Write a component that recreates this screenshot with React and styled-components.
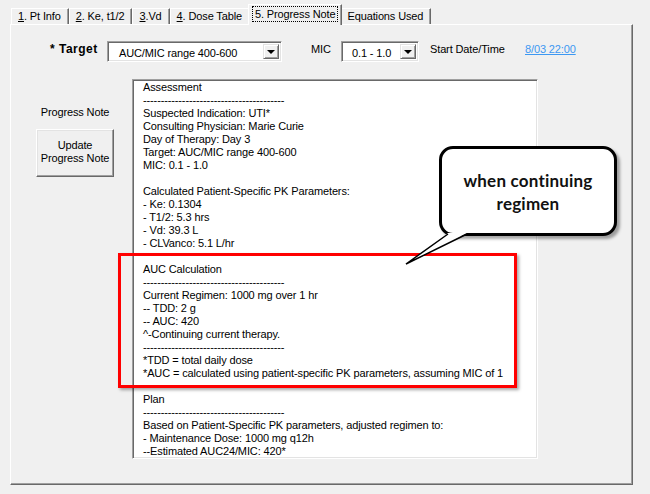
import React from "react";
import styled, { createGlobalStyle } from "styled-components";

const GlobalStyle = createGlobalStyle`
  html, body { margin: 0; padding: 0; background: #f0f0f0; }
  body { font-family: "Liberation Sans", Arial, sans-serif; font-size: 11px; color: #000; letter-spacing: -0.13px; }
`;

const Screen = styled.div`
  position: relative;
  width: 650px;
  height: 494px;
  overflow: hidden;
  background: #f0f0f0;
`;

const TabStrip = styled.div`
  display: flex;
  align-items: flex-end;
  height: 24px;
  padding-left: 11px;
  position: relative;
  z-index: 2;
`;

const Tab = styled.div`
  box-sizing: border-box;
  height: ${(p) => (p.$active ? "21px" : "16px")};
  margin: ${(p) => (p.$active ? "0 -2px -1px -2px" : "0")};
  padding: ${(p) => (p.$active ? "2px 4px 0 4px" : "0 5px 0 4px")};
  line-height: 15px;
  background: #f0f0f0;
  border-top: 1px solid #ffffff;
  border-left: 1px solid #ffffff;
  border-right: 1px solid #696969;
  box-shadow: inset -1px 0 0 #a0a0a0;
  white-space: nowrap;
  position: relative;
  z-index: ${(p) => (p.$active ? 3 : 1)};
`;

const TabText = styled.span`
  display: inline-block;
  padding: 0 2px;
  line-height: 14px;
  outline: ${(p) => (p.$focus ? "1px dotted #000" : "none")};
  outline-offset: 0;
`;

const Key = styled.span`
  text-decoration: underline;
`;

const Panel = styled.div`
  box-sizing: border-box;
  margin-left: 10px;
  width: 623px;
  height: 461px;
  border-top: 1px solid #ffffff;
  border-left: 1px solid #ffffff;
  border-right: 1px solid #696969;
  border-bottom: 1px solid #696969;
  box-shadow: inset -1px -1px 0 #a0a0a0;
  position: relative;
  z-index: 1;
`;

const TopRow = styled.div`
  display: flex;
  align-items: flex-start;
  margin-top: 16px;
  padding-left: 39px;
  height: 21px;
`;

const FieldLabel = styled.div`
  width: ${(p) => p.$w}px;
  margin-left: ${(p) => p.$ml || 0}px;
  padding-top: ${(p) => p.$pt || 2}px;
  font-weight: ${(p) => (p.$bold ? 700 : 400)};
  font-size: ${(p) => (p.$bold ? "12px" : "11px")};
  letter-spacing: ${(p) => (p.$bold ? "0.5px" : "-0.13px")};
  white-space: nowrap;
`;

const Select = styled.div`
  box-sizing: border-box;
  display: flex;
  width: ${(p) => p.$w}px;
  height: 21px;
  background: #fff;
  border-top: 1px solid #a0a0a0;
  border-left: 1px solid #a0a0a0;
  border-right: 1px solid #ffffff;
  border-bottom: 1px solid #ffffff;
  box-shadow: inset 1px 1px 0 #696969, inset -1px -1px 0 #e3e3e3;
  padding: 2px;
`;

const SelectValue = styled.div`
  flex: 1;
  padding-left: ${(p) => p.$pl}px;
  line-height: 16px;
  padding-top: 1px;
  white-space: nowrap;
`;

const DropButton = styled.div`
  box-sizing: border-box;
  width: 16px;
  height: 15px;
  background: #f0f0f0;
  border-top: 1px solid #e3e3e3;
  border-left: 1px solid #e3e3e3;
  border-right: 1px solid #696969;
  border-bottom: 1px solid #696969;
  box-shadow: inset 1px 1px 0 #ffffff, inset -1px -1px 0 #a0a0a0;
  display: flex;
  align-items: center;
  justify-content: center;
`;

const Arrow = styled.div`
  width: 0;
  height: 0;
  border-left: 4px solid transparent;
  border-right: 4px solid transparent;
  border-top: 4px solid #000;
  margin-top: 1px;
`;

const DateLink = styled.a`
  padding-top: 2px;
  color: #3d98f2;
  text-decoration: underline;
  white-space: nowrap;
  cursor: pointer;
`;

const ContentRow = styled.div`
  display: flex;
  align-items: flex-start;
  margin-top: 17px;
  padding-left: 25px;
`;

const SideColumn = styled.div`
  width: 78px;
  display: flex;
  flex-direction: column;
  align-items: center;
  padding-top: 27px;
`;

const SideLabel = styled.div`
  line-height: 13px;
  white-space: nowrap;
`;

const PushButton = styled.div`
  box-sizing: border-box;
  margin-top: 10px;
  width: 78px;
  height: 48px;
  background: #f0f0f0;
  border-top: 1px solid #ffffff;
  border-left: 1px solid #ffffff;
  border-right: 1px solid #696969;
  border-bottom: 1px solid #696969;
  box-shadow: inset -1px -1px 0 #a0a0a0, inset 1px 1px 0 #e3e3e3;
  display: flex;
  flex-direction: column;
  align-items: center;
  justify-content: center;
  line-height: 13px;
  text-align: center;
  padding-bottom: 3px;
`;

const NoteBox = styled.div`
  box-sizing: border-box;
  margin-left: 18px;
  width: 406px;
  height: 380px;
  background: #fff;
  border-top: 1px solid #a0a0a0;
  border-left: 1px solid #a0a0a0;
  border-right: 1px solid #ffffff;
  border-bottom: 1px solid #ffffff;
  box-shadow: inset 1px 1px 0 #696969, inset -1px -1px 0 #e3e3e3;
  padding: 1px 4px 0 10px;
  overflow: hidden;
`;

const NoteLine = styled.div`
  height: 13px;
  line-height: 13px;
  white-space: pre;
`;

const Highlight = styled.div`
  position: absolute;
  left: 118px;
  top: 253px;
  width: 399px;
  height: 135px;
  box-sizing: border-box;
  border: 3px solid #ff0000;
  box-shadow: 2px 2px 3px rgba(0, 0, 0, 0.35);
  z-index: 5;
`;

const Callout = styled.div`
  position: absolute;
  left: 439px;
  top: 146px;
  width: 178px;
  height: 90px;
  box-sizing: border-box;
  background: #fff;
  border: 3px solid #000;
  border-radius: 14px;
  box-shadow: 3px 3px 3px rgba(0, 0, 0, 0.35);
  display: flex;
  flex-direction: column;
  align-items: center;
  justify-content: center;
  padding-top: 1px;
  font-family: Lato, "Open Sans", sans-serif;
  font-weight: 700;
  font-size: 17px;
  letter-spacing: 0.2px;
  line-height: 23px;
  text-align: center;
  color: #111;
  z-index: 6;
`;

const Tail = styled.svg`
  position: absolute;
  left: 400px;
  top: 230px;
  z-index: 7;
  overflow: visible;
`;

const DASH = "----------------------------------------";

const noteLines = [
  "Assessment",
  DASH,
  "Suspected Indication: UTI*",
  "Consulting Physician: Marie Curie",
  "Day of Therapy: Day 3",
  "Target: AUC/MIC range 400-600",
  "MIC: 0.1 - 1.0",
  "",
  "Calculated Patient-Specific PK Parameters:",
  "- Ke: 0.1304",
  "- T1/2: 5.3 hrs",
  "- Vd: 39.3 L",
  "- CLVanco: 5.1 L/hr",
  "",
  "AUC Calculation",
  DASH,
  "Current Regimen: 1000 mg over 1 hr",
  "-- TDD: 2 g",
  "-- AUC: 420",
  "^-Continuing current therapy.",
  DASH,
  "*TDD = total daily dose",
  "*AUC = calculated using patient-specific PK parameters, assuming MIC of 1",
  "",
  "Plan",
  DASH,
  "Based on Patient-Specific PK parameters, adjusted regimen to:",
  "- Maintenance Dose: 1000 mg q12h",
  "--Estimated AUC24/MIC: 420*",
  "",
  "",
];

const tabs = [
  { key: "1", rest: ". Pt Info" },
  { key: "2", rest: ". Ke, t1/2" },
  { key: "3", rest: ".Vd" },
  { key: "4", rest: ". Dose Table" },
  { key: null, rest: "5. Progress Note", active: true },
  { key: null, rest: "Equations Used" },
];

function ComboBox({ width, value, pl }) {
  return (
    <Select $w={width}>
      <SelectValue $pl={pl}>{value}</SelectValue>
      <DropButton>
        <Arrow />
      </DropButton>
    </Select>
  );
}

export default function App() {
  return (
    <Screen>
      <GlobalStyle />
      <TabStrip>
        {tabs.map((t, i) => (
          <Tab key={i} $active={t.active}>
            <TabText $focus={t.active}>
              {t.key && <Key>{t.key}</Key>}
              {t.rest}
            </TabText>
          </Tab>
        ))}
      </TabStrip>
      <Panel>
        <TopRow>
          <FieldLabel $w={57} $bold $pt={1}>* Target</FieldLabel>
          <ComboBox width={175} value="AUC/MIC range 400-600" pl={9} />
          <FieldLabel $w={30} $ml={29}>MIC</FieldLabel>
          <ComboBox width={78} value="0.1 - 1.0" pl={8} />
          <FieldLabel $w={95} $ml={11}>Start Date/Time</FieldLabel>
          <DateLink>8/03 22:00</DateLink>
        </TopRow>
        <ContentRow>
          <SideColumn>
            <SideLabel>Progress Note</SideLabel>
            <PushButton>
              <span>Update</span>
              <span>Progress Note</span>
            </PushButton>
          </SideColumn>
          <NoteBox>
            {noteLines.map((l, i) => (
              <NoteLine key={i}>{l}</NoteLine>
            ))}
          </NoteBox>
        </ContentRow>
      </Panel>
      <Highlight />
      <Callout>
        <span>when continuing</span>
        <span>regimen</span>
      </Callout>
      <Tail width="80" height="40" viewBox="0 0 80 40">
        <polygon points="48,3 6,34 67,3" fill="#fff" />
        <polyline points="48,4 6,34 67,4" fill="none" stroke="#000" strokeWidth="1.5" strokeLinejoin="miter" />
      </Tail>
    </Screen>
  );
}
